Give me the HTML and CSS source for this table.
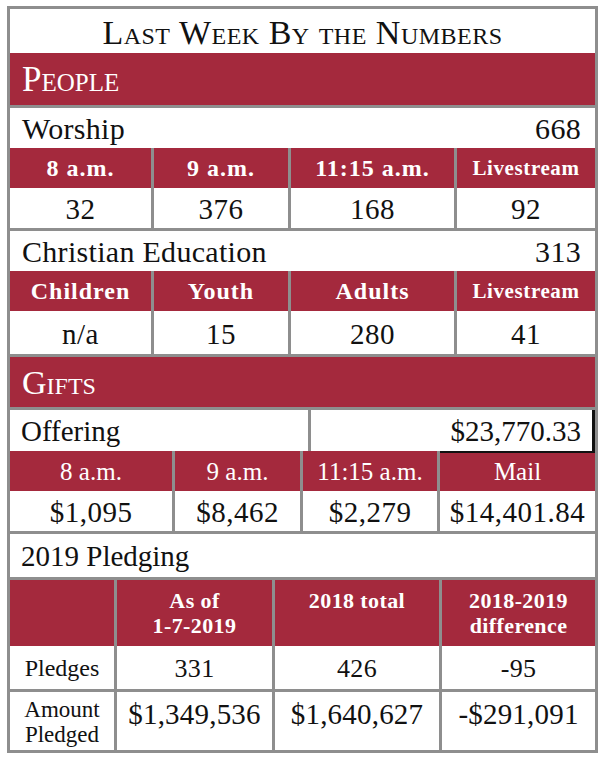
FILE: index.html
```html
<!DOCTYPE html>
<html lang="en">
<head>
<meta charset="utf-8">
<title>Last Week By the Numbers</title>
<link rel="stylesheet" href="styles.css">
</head>
<body>
<div class="card">
  <div class="group">
    <h1 class="title">Last Week By the Numbers</h1>
    <h2 class="band">People</h2>
  </div>

  <div class="group">
    <div class="line"><span>Worship</span><span>668</span></div>
    <div class="grid w4">
      <div class="th">8 a.m.</div>
      <div class="th">9 a.m.</div>
      <div class="th">11:15 a.m.</div>
      <div class="th sm">Livestream</div>
      <div class="td">32</div>
      <div class="td">376</div>
      <div class="td">168</div>
      <div class="td">92</div>
    </div>
  </div>

  <div class="group">
    <div class="line"><span>Christian Education</span><span>313</span></div>
    <div class="grid w4">
      <div class="th">Children</div>
      <div class="th">Youth</div>
      <div class="th">Adults</div>
      <div class="th sm">Livestream</div>
      <div class="td tall">n/a</div>
      <div class="td tall">15</div>
      <div class="td tall">280</div>
      <div class="td tall">41</div>
    </div>
  </div>

  <h2 class="band gifts">Gifts</h2>

  <div class="group">
    <div class="grid g2">
      <div class="line offer">Offering</div>
      <div class="line offer right total">$23,770.33</div>
    </div>
    <div class="grid g4">
      <div class="th light">8 a.m.</div>
      <div class="th light">9 a.m.</div>
      <div class="th light">11:15 a.m.</div>
      <div class="th light mail">Mail</div>
      <div class="td">$1,095</div>
      <div class="td">$8,462</div>
      <div class="td">$2,279</div>
      <div class="td">$14,401.84</div>
    </div>
  </div>

  <div class="line pledging">2019 Pledging</div>

  <div class="grid p4">
    <div class="ph"></div>
    <div class="ph">As of<br>1-7-2019</div>
    <div class="ph">2018 total</div>
    <div class="ph">2018-2019<br>difference</div>
    <div class="pl">Pledges</div>
    <div class="pv">331</div>
    <div class="pv">426</div>
    <div class="pv">-95</div>
    <div class="pl amt">Amount<br>Pledged</div>
    <div class="pv amt big">$1,349,536</div>
    <div class="pv amt big">$1,640,627</div>
    <div class="pv amt big">-$291,091</div>
  </div>
</div>
</body>
</html>
```

FILE: styles.css
```css
* { box-sizing: border-box; }

body {
  margin: 0;
  background: #fff;
  color: #111;
  font-family: "Liberation Serif", serif;
}

.card {
  margin: 6px 0 0 7px;
  width: 591px;
  border: 3px solid #8e8e8e;
  background: #8e8e8e;
  display: flex;
  flex-direction: column;
  gap: 3px;
}

.group {
  display: flex;
  flex-direction: column;
}

.title {
  margin: 0;
  height: 44px;
  background: #fff;
  display: flex;
  align-items: center;
  justify-content: center;
  font-variant: small-caps;
  font-weight: normal;
  font-size: 34px;
  letter-spacing: 0.5px;
  padding-top: 3px;
}

.band {
  margin: 0;
  height: 52px;
  background: #a4293d;
  color: #fff;
  display: flex;
  align-items: center;
  padding-left: 12px;
  font-variant: small-caps;
  font-weight: normal;
  font-size: 35px;
  padding-top: 1px;
}

.band.gifts {
  height: 50px;
  font-size: 34px;
}

.line {
  height: 40px;
  background: #fff;
  display: flex;
  justify-content: space-between;
  align-items: center;
  padding: 2px 14px 0 12px;
  font-size: 30px;
  letter-spacing: 0.3px;
}

.line.offer {
  height: 41px;
  font-size: 29px;
  letter-spacing: 0;
  padding-left: 11px;
}

.line.right {
  justify-content: flex-end;
}

.line.total {
  box-shadow: inset -3px 0 0 #111;
}

.line.pledging {
  height: 43px;
  font-size: 29px;
  letter-spacing: 0;
  padding-left: 11px;
}

.grid {
  display: grid;
  column-gap: 3px;
}

.w4 { grid-template-columns: 141fr 134fr 163fr 138fr; }
.g2 { grid-template-columns: 298fr 284fr; }
.g4 { grid-template-columns: 162fr 125fr 134fr 155fr; }
.p4 { grid-template-columns: 104fr 155fr 164fr 153fr; }

.th {
  background: #a4293d;
  color: #fff;
  height: 40px;
  display: flex;
  align-items: center;
  justify-content: center;
  font-weight: bold;
  font-size: 24px;
  letter-spacing: 1px;
  padding-top: 1px;
}

.th.sm {
  font-size: 21px;
  letter-spacing: 0.6px;
}

.th.light {
  font-weight: normal;
  font-size: 25px;
  letter-spacing: 0;
}

.th.mail {
  box-shadow: inset 0 2px 0 #111;
}

.td {
  background: #fff;
  height: 40px;
  display: flex;
  align-items: center;
  justify-content: center;
  font-size: 29px;
  letter-spacing: 0.5px;
  padding-top: 3px;
}

.td.tall {
  height: 43px;
}

.ph {
  background: #a4293d;
  color: #fff;
  height: 66px;
  text-align: center;
  font-weight: bold;
  font-size: 22px;
  line-height: 25px;
  padding-top: 8px;
  letter-spacing: 0.4px;
}

.pl {
  background: #fff;
  height: 43px;
  display: flex;
  align-items: center;
  justify-content: center;
  text-align: center;
  font-size: 24px;
  padding-top: 2px;
}

.pv {
  background: #fff;
  height: 43px;
  display: flex;
  align-items: center;
  justify-content: center;
  font-size: 26px;
  letter-spacing: 0.3px;
  padding-top: 2px;
}

.amt {
  margin-top: 3px;
  height: 58px;
}

.pl.amt {
  font-size: 23px;
  line-height: 25px;
  padding-top: 2px;
}

.pv.amt {
  align-items: flex-start;
  padding-top: 6px;
}

.big {
  font-size: 29px;
  letter-spacing: 0.2px;
}
```
